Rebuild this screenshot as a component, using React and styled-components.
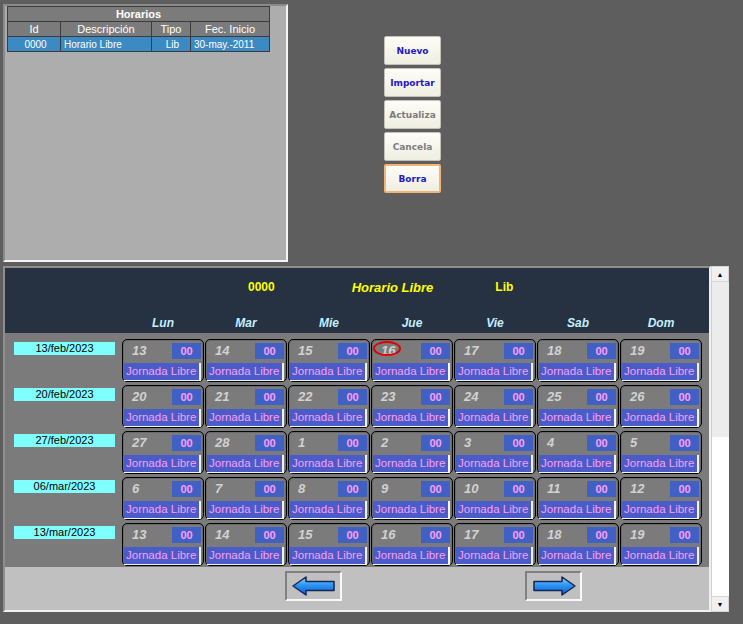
import React from "react";
import styled, { createGlobalStyle } from "styled-components";

const GlobalStyle = createGlobalStyle`
  body {
    margin: 0;
    background: #5e5e5e;
    font-family: "Liberation Sans", Arial, sans-serif;
  }
  #root {
    width: 743px;
    height: 624px;
    overflow: hidden;
  }
`;

const weeks = [
  { label: "13/feb/2023", days: [13, 14, 15, 16, 17, 18, 19] },
  { label: "20/feb/2023", days: [20, 21, 22, 23, 24, 25, 26] },
  { label: "27/feb/2023", days: [27, 28, 1, 2, 3, 4, 5] },
  { label: "06/mar/2023", days: [6, 7, 8, 9, 10, 11, 12] },
  { label: "13/mar/2023", days: [13, 14, 15, 16, 17, 18, 19] },
];

const dayNames = ["Lun", "Mar", "Mie", "Jue", "Vie", "Sab", "Dom"];

const buttons = [
  { text: "Nuevo", active: true },
  { text: "Importar", active: true },
  { text: "Actualiza", active: false },
  { text: "Cancela", active: false },
  { text: "Borra", active: true, focused: true },
];

const Top = styled.div`
  display: flex;
  align-items: flex-start;
  height: 266px;
  padding: 4px 0 0 3px;
  box-sizing: border-box;
`;

const ListPanel = styled.div`
  width: 285px;
  height: 258px;
  box-sizing: border-box;
  background: #adadad;
  border: 2px solid;
  border-color: #8a8a8a #f4f4f4 #f4f4f4 #8a8a8a;
  padding: 0 0 0 2px;
`;

const Table = styled.table`
  border-collapse: collapse;
  width: 262px;
  table-layout: fixed;
  font-size: 11px;
  color: #fff;
`;

const Th = styled.th`
  background: #7b7b7b;
  border: 1px solid #3c3c3c;
  height: 14px;
  padding: 0;
  font-weight: ${(p) => (p.$title ? "bold" : "normal")};
  line-height: 13px;
`;

const Td = styled.td`
  background: #3c8ac4;
  border: 1px solid #3c3c3c;
  height: 14px;
  padding: 0 0 0 3px;
  font-size: 10px;
  text-align: ${(p) => p.$align || "left"};
`;

const ButtonColumn = styled.div`
  display: flex;
  flex-direction: column;
  gap: 3px;
  margin: 32px 0 0 96px;
`;

const ActionButton = styled.button`
  width: 57px;
  height: 29px;
  box-sizing: border-box;
  padding: 0;
  border-radius: 2px;
  border: ${(p) => (p.$focused ? "2px solid #f4b478" : "1px solid #c4c2b8")};
  background: linear-gradient(#fdfdf8, #efeee2);
  font-family: "DejaVu Sans", Verdana, sans-serif;
  font-size: 9px;
  font-weight: bold;
  color: ${(p) => (p.$active ? "#2418c8" : "#7c7c7c")};
`;

const Bottom = styled.div`
  display: flex;
  height: 346px;
  padding-left: 3px;
`;

const MainPanel = styled.div`
  width: 708px;
  box-sizing: border-box;
  border: 2px solid;
  border-color: #8e8e8e #f0f0f0 #f0f0f0 #8e8e8e;
  background: #7b7b7b;
  display: flex;
  flex-direction: column;
`;

const Header = styled.div`
  height: 65px;
  background: #263141;
  display: flex;
  flex-direction: column;
`;

const TitleRow = styled.div`
  display: flex;
  align-items: center;
  height: 36px;
  padding-top: 1px;
  color: #ffff00;
  font-weight: bold;
  font-size: 12px;
`;

const TitleText = styled.span`
  margin-left: ${(p) => p.$offset}px;
  font-style: ${(p) => (p.$italic ? "italic" : "normal")};
  font-size: ${(p) => (p.$italic ? 13 : 12)}px;
`;

const DayNameRow = styled.div`
  display: grid;
  grid-template-columns: repeat(7, 82px);
  column-gap: 1px;
  padding-left: 117px;
  margin-top: 11px;
`;

const DayName = styled.span`
  text-align: center;
  font-style: italic;
  font-weight: bold;
  font-size: 12px;
  color: #c4efff;
`;

const Grid = styled.div`
  display: flex;
  flex-direction: column;
  gap: 2px;
  padding-top: 6px;
  height: 234px;
  box-sizing: border-box;
`;

const WeekRow = styled.div`
  display: flex;
  align-items: flex-start;
  height: 44px;
`;

const DateLabel = styled.div`
  width: 101px;
  height: 13px;
  margin: 3px 7px 0 9px;
  background: #80ffff;
  color: #000;
  font-size: 11px;
  line-height: 13px;
  text-align: center;
`;

const Cells = styled.div`
  display: grid;
  grid-template-columns: repeat(7, 82px);
  column-gap: 1px;
`;

const DayCell = styled.div`
  position: relative;
  height: 43px;
  box-sizing: border-box;
  border: 1px solid #000;
  border-radius: 5px;
  box-shadow: inset 0 0 0 1px #6a6a6a;
  display: flex;
  flex-direction: column;
  padding: 1px 2px 0 1px;
`;

const CellTop = styled.div`
  display: flex;
  justify-content: space-between;
  align-items: center;
  height: 18px;
  padding-left: 8px;
`;

const DayNumber = styled.span`
  font-style: italic;
  font-weight: bold;
  font-size: 13px;
  color: #d2d2d2;
`;

const HourBox = styled.span`
  width: 29px;
  height: 16px;
  margin-top: 2px;
  background: #4160c4;
  color: #ff9cff;
  font-size: 11px;
  font-weight: bold;
  line-height: 16px;
  text-align: center;
`;

const Jornada = styled.div`
  margin-top: 4px;
  height: 18px;
  box-sizing: border-box;
  background: #4a5cc8;
  border-right: 2px solid #f4f4f4;
  border-bottom: 1px solid #f4f4f4;
  color: #ff9cff;
  font-size: 11.5px;
  line-height: 17px;
  padding-left: 2px;
  white-space: nowrap;
  overflow: hidden;
`;

const TodayMark = styled.span`
  position: absolute;
  left: 1px;
  top: 1px;
  width: 28px;
  height: 15px;
  box-sizing: border-box;
  border: 2px solid #e00000;
  border-radius: 50%;
`;

const Footer = styled.div`
  flex: 1;
  background: #c0c0c0;
  display: flex;
  align-items: flex-start;
  padding: 4px 0 0 280px;
  gap: 183px;
`;

const NavButton = styled.button`
  width: 57px;
  height: 30px;
  box-sizing: border-box;
  padding: 0;
  background: #c0c0c0;
  border: 2px solid;
  border-color: #808080 #fafafa #fafafa #808080;
  display: flex;
  align-items: center;
  justify-content: center;
`;

const Scrollbar = styled.div`
  width: 18px;
  display: flex;
  flex-direction: column;
  background: #ffffff;
`;

const ScrollButton = styled.div`
  height: 16px;
  background: #f0f0f0;
  border: 1px solid #d6d6d6;
  box-sizing: border-box;
  display: flex;
  align-items: center;
  justify-content: center;
  font-size: 7px;
  color: #000;
`;

const Thumb = styled.div`
  height: 155px;
  background: #ececec;
  border-left: 1px solid #cfcfcf;
`;

const Track = styled.div`
  flex: 1;
  background: #ffffff;
  border-left: 1px solid #cfcfcf;
`;

const Arrow = ({ dir }) => (
  <svg width="46" height="22" viewBox="0 0 46 22">
    <defs>
      <linearGradient id={`ag-${dir}`} x1="0" y1="0" x2="0" y2="1">
        <stop offset="0" stopColor="#8fd4ff" />
        <stop offset="0.45" stopColor="#2c96f4" />
        <stop offset="1" stopColor="#0f5cd4" />
      </linearGradient>
    </defs>
    <path
      d="M2 11 L15 2 L15 6.5 L43 6.5 L43 15.5 L15 15.5 L15 20 Z"
      transform={dir === "right" ? "translate(46 0) scale(-1 1)" : undefined}
      fill={`url(#ag-${dir})`}
      stroke="#14254f"
      strokeWidth="1.5"
      strokeLinejoin="round"
    />
  </svg>
);

export default function App() {
  return (
    <>
      <GlobalStyle />
      <Top>
        <ListPanel>
          <Table>
            <colgroup>
              <col style={{ width: 53 }} />
              <col style={{ width: 91 }} />
              <col style={{ width: 39 }} />
              <col style={{ width: 79 }} />
            </colgroup>
            <thead>
              <tr>
                <Th $title colSpan={4}>Horarios</Th>
              </tr>
              <tr>
                <Th>Id</Th>
                <Th>Descripción</Th>
                <Th>Tipo</Th>
                <Th>Fec. Inicio</Th>
              </tr>
            </thead>
            <tbody>
              <tr>
                <Td $align="center">0000</Td>
                <Td>Horario Libre</Td>
                <Td $align="center">Lib</Td>
                <Td>30-may.-2011</Td>
              </tr>
            </tbody>
          </Table>
        </ListPanel>
        <ButtonColumn>
          {buttons.map((b) => (
            <ActionButton key={b.text} $active={b.active} $focused={b.focused}>
              {b.text}
            </ActionButton>
          ))}
        </ButtonColumn>
      </Top>
      <Bottom>
        <MainPanel>
          <Header>
            <TitleRow>
              <TitleText $offset={243}>0000</TitleText>
              <TitleText $offset={77} $italic>
                Horario Libre
              </TitleText>
              <TitleText $offset={62}>Lib</TitleText>
            </TitleRow>
            <DayNameRow>
              {dayNames.map((d) => (
                <DayName key={d}>{d}</DayName>
              ))}
            </DayNameRow>
          </Header>
          <Grid>
            {weeks.map((w, wi) => (
              <WeekRow key={wi}>
                <DateLabel>{w.label}</DateLabel>
                <Cells>
                  {w.days.map((d, di) => (
                    <DayCell key={di}>
                      {wi === 0 && di === 3 && <TodayMark />}
                      <CellTop>
                        <DayNumber>{d}</DayNumber>
                        <HourBox>00</HourBox>
                      </CellTop>
                      <Jornada>Jornada Libre</Jornada>
                    </DayCell>
                  ))}
                </Cells>
              </WeekRow>
            ))}
          </Grid>
          <Footer>
            <NavButton>
              <Arrow dir="left" />
            </NavButton>
            <NavButton>
              <Arrow dir="right" />
            </NavButton>
          </Footer>
        </MainPanel>
        <Scrollbar>
          <ScrollButton>▲</ScrollButton>
          <Thumb />
          <Track />
          <ScrollButton>▼</ScrollButton>
        </Scrollbar>
      </Bottom>
    </>
  );
}
